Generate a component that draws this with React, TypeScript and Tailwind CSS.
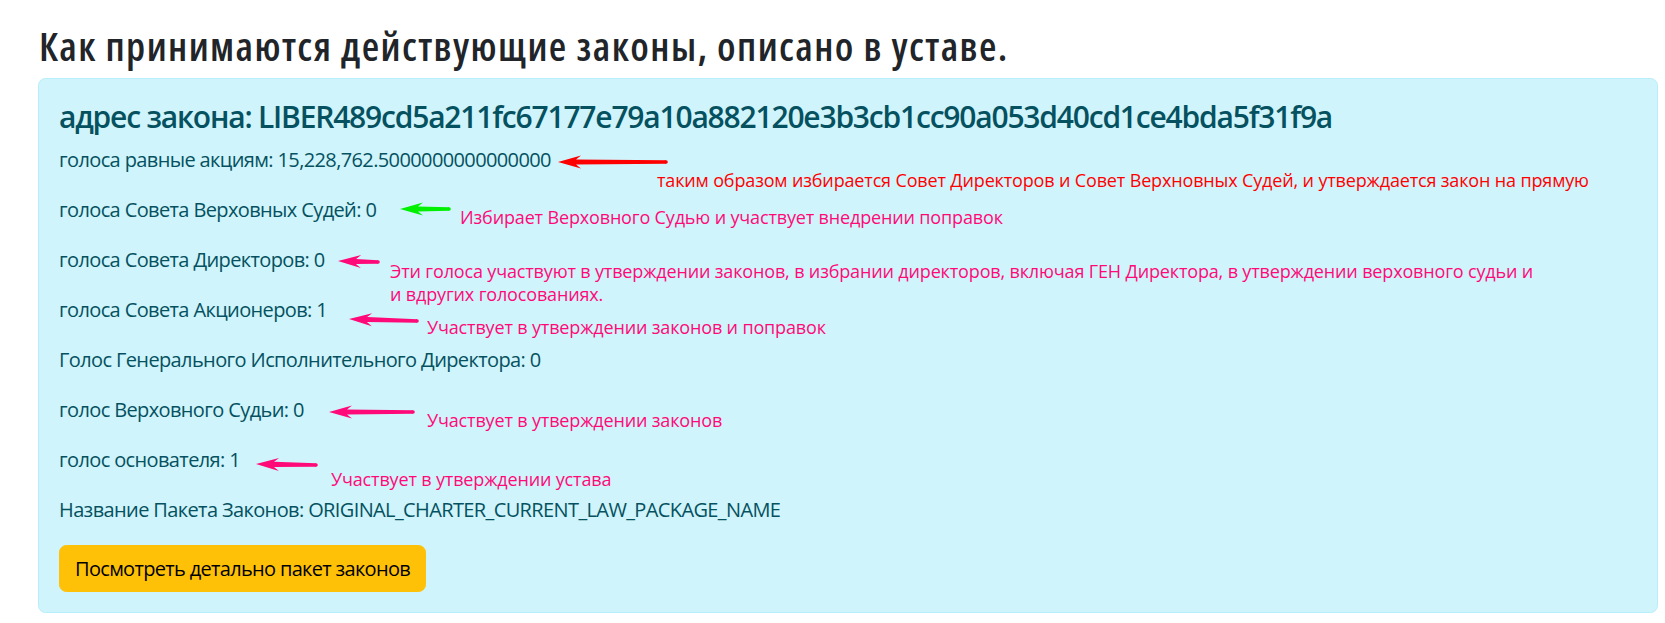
import React from "react";

type Arrow = { tx: number; ty: number; ex: number; ey: number; c: string };

const arrows: Arrow[] = [
  { tx: 558, ty: 162, ex: 666, ey: 162, c: "#ff0000" },
  { tx: 400, ty: 209, ex: 449, ey: 209, c: "#00f000" },
  { tx: 338, ty: 261, ex: 378, ey: 262, c: "#ff0a78" },
  { tx: 349, ty: 319, ex: 417, ey: 321, c: "#ff0a78" },
  { tx: 329, ty: 412, ex: 413, ey: 412, c: "#ff0a78" },
  { tx: 256, ty: 464, ex: 316, ey: 465, c: "#ff0a78" },
];

function arrowPoints(a: Arrow) {
  const dx = a.ex - a.tx;
  const dy = a.ey - a.ty;
  const len = Math.hypot(dx, dy);
  const ux = dx / len;
  const uy = dy / len;
  const nx = -uy;
  const ny = ux;
  const p = (d: number, w: number, bx = a.tx, by = a.ty) =>
    `${(bx + ux * d + nx * w).toFixed(1)},${(by + uy * d + ny * w).toFixed(1)}`;
  return [
    p(0, 0),
    p(23, 6.5),
    p(18, 2.6),
    p(0, 1.8, a.ex, a.ey),
    p(0, -1.8, a.ex, a.ey),
    p(18, -2.6),
    p(23, -6.5),
  ].join(" ");
}

const rows = [
  "голоса равные акциям: 15,228,762.5000000000000000",
  "голоса Совета Верховных Судей: 0",
  "голоса Совета Директоров: 0",
  "голоса Совета Акционеров: 1",
  "Голос Генерального Исполнительного Директора: 0",
  "голос Верховного Судьи: 0",
  "голос основателя: 1",
  "Название Пакета Законов: ORIGINAL_CHARTER_CURRENT_LAW_PACKAGE_NAME",
];

type Note = { x: number; y: number; t: string; c: string };
const notes: Note[] = [
  {
    x: 657,
    y: 180,
    c: "#ff0000",
    t: "таким образом избирается Совет Директоров и Совет Верхновных Судей, и утверждается закон на прямую",
  },
  { x: 460, y: 217, c: "#ff0a78", t: "Избирает Верховного Судью и участвует внедрении поправок" },
  {
    x: 390,
    y: 271,
    c: "#ff0a78",
    t: "Эти голоса участвуют в утверждении законов, в избрании директоров, включая ГЕН Директора, в утверждении верховного судьи и",
  },
  { x: 390, y: 294, c: "#ff0a78", t: "и вдругих голосованиях." },
  { x: 427, y: 327, c: "#ff0a78", t: "Участвует в утверждении законов и поправок" },
  { x: 427, y: 420, c: "#ff0a78", t: "Участвует в утверждении законов" },
  { x: 331, y: 479, c: "#ff0a78", t: "Участвует в утверждении устава" },
];

export default function App() {
  return (
    <div className="relative w-full min-h-[623px] bg-white font-['Open_Sans',sans-serif] overflow-hidden">
      <div className="pl-[38px] pr-[7px] pt-[22px]">
        <h2 className="m-0 mb-[8px] pl-[1px] font-['Open_Sans',sans-serif] text-[40px] leading-[48px] font-semibold text-[#212529] font-stretch-semi-condensed tracking-[1.4px]">
          Как принимаются действующие законы, описано в уставе.
        </h2>
        <div className="rounded-[7.5px] border border-[#b6effb] bg-[#cff4fc] p-[20px] text-[#055160]">
          <h4 className="m-0 mb-[10px] text-[30px] leading-[36px] font-semibold tracking-[-1.2px]">
            адрес закона: LIBER489cd5a211fc67177e79a10a882120e3b3cb1cc90a053d40cd1ce4bda5f31f9a
          </h4>
          <div className="flex flex-col gap-[20px]">
            {rows.map((r) => (
              <p key={r} className="m-0 text-[20px] leading-[30px] tracking-[-0.62px]">
                {r}
              </p>
            ))}
            <div className="flex">
              <button className="rounded-[7.5px] border border-[#ffc107] bg-[#ffc107] px-[15px] py-[7.5px] text-[20px] leading-[30px] text-black tracking-[-0.68px]">
                Посмотреть детально пакет законов
              </button>
            </div>
          </div>
        </div>
      </div>
      <svg
        className="absolute left-0 top-0 pointer-events-none"
        width={1665}
        height={623}
        viewBox="0 0 1665 623"
      >
        {arrows.map((a, i) => (
          <g key={i} fill={a.c}>
            <polygon points={arrowPoints(a)} />
            <circle cx={a.ex} cy={a.ey} r={1.8} />
          </g>
        ))}
      </svg>
      {notes.map((n, i) => (
        <div
          key={i}
          className="absolute whitespace-nowrap text-[18px] leading-[20px] tracking-[-0.15px] font-['Open_Sans',sans-serif]"
          style={{ left: n.x, top: n.y - 10, color: n.c }}
        >
          {n.t}
        </div>
      ))}
    </div>
  );
}
